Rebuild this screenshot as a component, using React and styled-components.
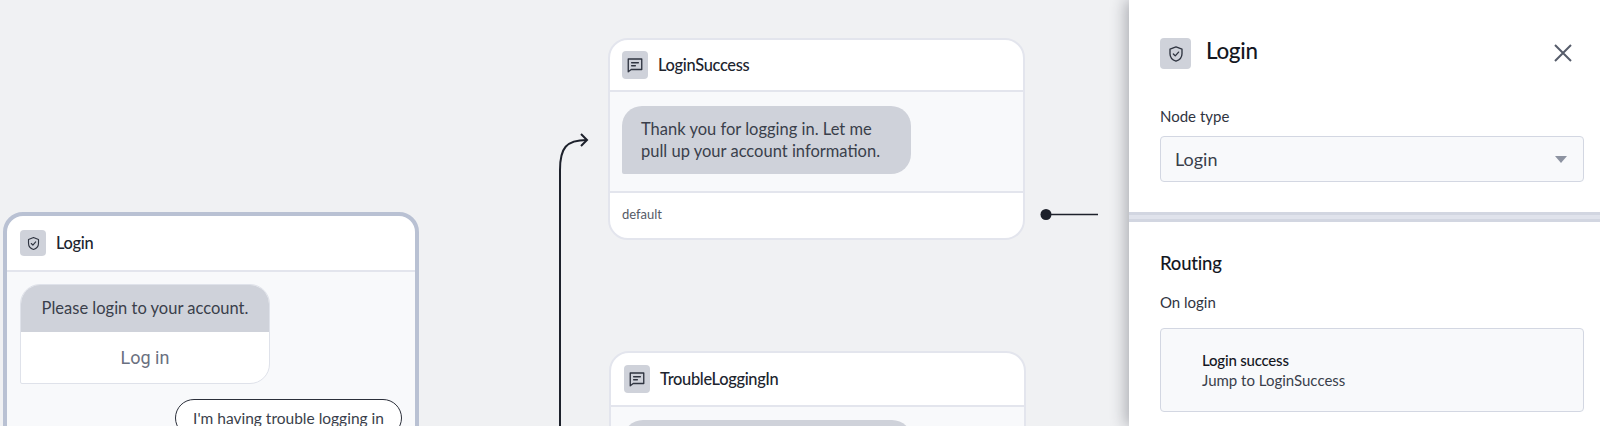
import styled, { createGlobalStyle } from 'styled-components';

const GlobalStyle = createGlobalStyle`
  html, body {
    margin: 0;
    height: 100%;
    overflow: hidden;
    background: #f0f1f3;
    font-family: Lato, 'Open Sans', sans-serif;
    color: #1f2430;
  }
`;

const Page = styled.div`
  display: flex;
  height: 426px;
  width: 1600px;
  overflow: hidden;
`;

const Canvas = styled.div`
  position: relative;
  flex: 1;
  height: 100%;
  overflow: hidden;
`;

const Node = styled.div`
  position: absolute;
  left: ${(p) => p.$x}px;
  top: ${(p) => p.$y}px;
  width: ${(p) => p.$w}px;
  box-sizing: border-box;
  background: #fff;
  border: ${(p) => (p.$selected ? '4px solid #b9c1d3' : '2px solid #e3e5ed')};
  border-radius: 20px;
  overflow: hidden;
`;

const NodeHeader = styled.div`
  display: flex;
  align-items: center;
  gap: 10px;
  height: ${(p) => p.$h}px;
  padding-left: ${(p) => p.$pad}px;
  border-bottom: 2px solid #e3e5ed;
  box-sizing: border-box;
`;

const IconBox = styled.div`
  display: flex;
  align-items: center;
  justify-content: center;
  flex: none;
  width: ${(p) => p.$w}px;
  height: ${(p) => p.$h}px;
  background: #cfd2da;
  border-radius: 4px;
  color: #2f3440;
`;

const NodeTitle = styled.div`
  margin-bottom: 2px;
  font-size: 16.4px;
  font-weight: 500;
  letter-spacing: -0.3px;
  color: #20242e;
`;

const NodeBody = styled.div`
  display: flex;
  flex-direction: column;
  background: #f8f9fb;
  padding: ${(p) => p.$pad};
  min-height: ${(p) => p.$min || 0}px;
  box-sizing: border-box;
`;

const Bubble = styled.div`
  box-sizing: border-box;
  width: 289px;
  min-height: 68px;
  padding: 12px 19px;
  background: #cfd2da;
  border-radius: 20px 20px 20px 2px;
  font-size: 16.5px;
  line-height: 22px;
  color: #3a3f4b;
`;

const LoginCard = styled.div`
  width: 250px;
  box-sizing: border-box;
  border-radius: 20px 20px 20px 2px;
  overflow: hidden;
  border: 1px solid #dfe2ea;
  background: #fff;
`;

const LoginPrompt = styled.div`
  height: 47px;
  background: #cfd2da;
  font-size: 16.5px;
  line-height: 47px;
  text-align: center;
  color: #3a3f4b;
`;

const LoginButton = styled.div`
  height: 51px;
  font-family: Roboto, sans-serif;
  font-size: 18px;
  line-height: 51px;
  text-align: center;
  color: #6a7080;
`;

const ReplyBubble = styled.div`
  align-self: flex-end;
  box-sizing: border-box;
  width: 227px;
  margin-top: 15px;
  padding: 7px 0;
  border: 1.5px solid #2b2f3a;
  border-radius: 20px;
  background: #fff;
  font-size: 15.5px;
  line-height: 22px;
  text-align: center;
  color: #3a3f4b;
`;

const NodeFooter = styled.div`
  display: flex;
  align-items: center;
  height: 47px;
  padding: 0 0 3px 12px;
  box-sizing: border-box;
  border-top: 2px solid #e3e5ed;
  font-size: 13px;
  color: #555a66;
`;

const Edges = styled.svg`
  position: absolute;
  inset: 0;
  width: 100%;
  height: 100%;
  pointer-events: none;
`;

const Panel = styled.aside`
  position: relative;
  flex: none;
  width: 471px;
  height: 426px;
  background: #fff;
  box-shadow: -4px 0 14px rgba(40, 44, 56, 0.32);
  overflow: hidden;
`;

const PanelTop = styled.div`
  height: 212px;
  box-sizing: border-box;
  padding: 38px 16px 0 31px;
`;

const PanelHead = styled.div`
  display: flex;
  align-items: center;
  gap: 15px;
  height: 31px;
`;

const PanelTitle = styled.h2`
  margin: 0 0 6px;
  flex: 1;
  font-size: 22.4px;
  font-weight: 500;
  letter-spacing: -0.3px;
  color: #14171f;
`;

const CloseButton = styled.button`
  display: flex;
  padding: 0;
  margin: 0 11px 2px 0;
  border: 0;
  background: none;
  color: #565c6a;
`;

const FieldLabel = styled.div`
  margin-top: ${(p) => p.$top}px;
  font-size: 15px;
  line-height: 20px;
  color: #30343f;
`;

const Select = styled.div`
  display: flex;
  align-items: center;
  justify-content: space-between;
  height: 46px;
  margin-top: 10px;
  padding: 0 16px 0 14px;
  box-sizing: border-box;
  background: #f8f9fb;
  border: 1.5px solid #d3d7e2;
  border-radius: 4px;
  font-size: 18px;
  color: #3a3f4b;
`;

const Caret = styled.span`
  width: 0;
  height: 0;
  border-left: 6.5px solid transparent;
  border-right: 6.5px solid transparent;
  border-top: 7px solid #8d93a1;
`;

const PanelDivider = styled.div`
  height: 10px;
  box-sizing: border-box;
  background: #e0e3ec;
  border-top: 3px solid #d2d6e1;
  border-bottom: 3px solid #d2d6e1;
`;

const PanelSection = styled.div`
  padding: 30px 16px 0 31px;
`;

const SectionTitle = styled.h3`
  margin: 0;
  font-size: 18.5px;
  line-height: 22px;
  font-weight: 500;
  letter-spacing: -0.2px;
  color: #14171f;
`;

const RouteCard = styled.div`
  display: flex;
  flex-direction: column;
  justify-content: center;
  height: 84px;
  margin-top: 16px;
  padding-left: 41px;
  box-sizing: border-box;
  background: #f8f9fb;
  border: 1.5px solid #d3d7e2;
  border-radius: 4px;
  font-size: 15px;
  line-height: 20px;
`;

const RouteName = styled.div`
  font-weight: 500;
  letter-spacing: -0.2px;
  color: #14171f;
`;

const RouteTarget = styled.div`
  color: #3a3f4b;
`;

const ShieldIcon = ({ size }) => (
  <svg width={size} height={size} viewBox="0 0 24 24" fill="none" stroke="currentColor" strokeWidth="1.8" strokeLinecap="round" strokeLinejoin="round">
    <path d="M12 2.5 20 5.5v6c0 5-3.4 8.4-8 10-4.6-1.6-8-5-8-10v-6l8-3Z" />
    <path d="m8.5 12 2.5 2.5 4.5-5" />
  </svg>
);

const MessageIcon = ({ size }) => (
  <svg width={size} height={size} viewBox="0 0 24 24" fill="none" stroke="currentColor" strokeWidth="1.8" strokeLinejoin="round" strokeLinecap="round">
    <path d="M3 4h18v14H7l-4 3V4Z" />
    <path d="M7.5 9h9M7.5 13h5" />
  </svg>
);

const CloseIcon = () => (
  <svg width="20" height="20" viewBox="0 0 20 20" fill="none" stroke="currentColor" strokeWidth="2">
    <path d="M2 2l16 16M18 2 2 18" />
  </svg>
);

export default function App() {
  return (
    <Page>
      <GlobalStyle />
      <Canvas>
        <Node $x={3} $y={212} $w={416} $selected>
          <NodeHeader $h={56} $pad={13}>
            <IconBox $w={26} $h={26}>
              <ShieldIcon size={15} />
            </IconBox>
            <NodeTitle>Login</NodeTitle>
          </NodeHeader>
          <NodeBody $pad="12px 13px 20px">
            <LoginCard>
              <LoginPrompt>Please login to your account.</LoginPrompt>
              <LoginButton>Log in</LoginButton>
            </LoginCard>
            <ReplyBubble>I'm having trouble logging in</ReplyBubble>
          </NodeBody>
        </Node>

        <Node $x={608} $y={38} $w={417}>
          <NodeHeader $h={52} $pad={12}>
            <IconBox $w={26} $h={28}>
              <MessageIcon size={18} />
            </IconBox>
            <NodeTitle>LoginSuccess</NodeTitle>
          </NodeHeader>
          <NodeBody $pad="14px 12px 0" $min={99}>
            <Bubble>
              Thank you for logging in. Let me
              <br />
              pull up your account information.
            </Bubble>
          </NodeBody>
          <NodeFooter>default</NodeFooter>
        </Node>

        <Node $x={609} $y={351} $w={417}>
          <NodeHeader $h={54} $pad={13}>
            <IconBox $w={26} $h={28}>
              <MessageIcon size={18} />
            </IconBox>
            <NodeTitle>TroubleLoggingIn</NodeTitle>
          </NodeHeader>
          <NodeBody $pad="13px 12px 0" $min={100}>
            <Bubble />
          </NodeBody>
        </Node>

        <Edges viewBox="0 0 1129 426">
          <path d="M560 426V170c0-22 6-30 27-30" fill="none" stroke="#1d212b" strokeWidth="2" />
          <path d="m581 134 6 6-6 6" fill="none" stroke="#1d212b" strokeWidth="2" />
          <circle cx="1046" cy="214.5" r="5.5" fill="#1d212b" />
          <path d="M1046 214.5h52" stroke="#1d212b" strokeWidth="1.6" />
        </Edges>
      </Canvas>

      <Panel>
        <PanelTop>
          <PanelHead>
            <IconBox $w={31} $h={31}>
              <ShieldIcon size={18} />
            </IconBox>
            <PanelTitle>Login</PanelTitle>
            <CloseButton aria-label="Close">
              <CloseIcon />
            </CloseButton>
          </PanelHead>
          <FieldLabel $top={37}>Node type</FieldLabel>
          <Select>
            Login
            <Caret />
          </Select>
        </PanelTop>
        <PanelDivider />
        <PanelSection>
          <SectionTitle>Routing</SectionTitle>
          <FieldLabel $top={18}>On login</FieldLabel>
          <RouteCard>
            <RouteName>Login success</RouteName>
            <RouteTarget>Jump to LoginSuccess</RouteTarget>
          </RouteCard>
        </PanelSection>
      </Panel>
    </Page>
  );
}
